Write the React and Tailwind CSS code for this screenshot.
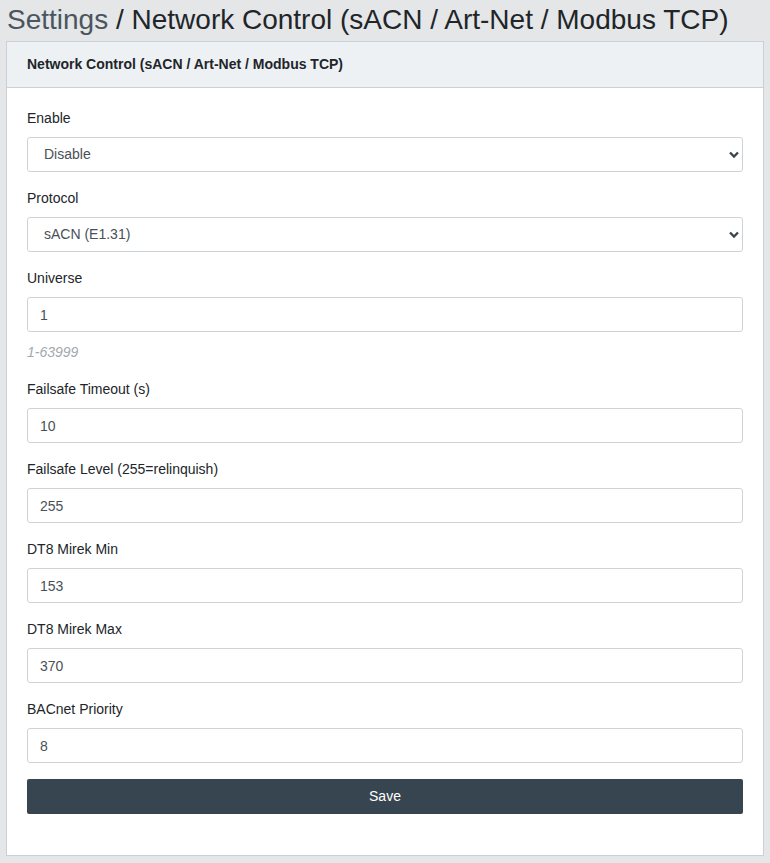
import React from 'react'

const fields = [
  { label: 'Universe', value: '1', help: '1-63999' },
  { label: 'Failsafe Timeout (s)', value: '10' },
  { label: 'Failsafe Level (255=relinquish)', value: '255' },
  { label: 'DT8 Mirek Min', value: '153' },
  { label: 'DT8 Mirek Max', value: '370' },
  { label: 'BACnet Priority', value: '8' },
]

function SelectField({ label, value, options }) {
  return (
    <div className="mb-4">
      <label className="block mb-[8px] leading-[21px]">{label}</label>
      <div className="relative">
        <select
          defaultValue={value}
          className="appearance-none w-full h-[35px] pl-[16px] pr-6 bg-white border border-[#ccd4da] rounded-[3px] text-[#495057] text-[14px] outline-none"
        >
          {options.map((o) => (
            <option key={o}>{o}</option>
          ))}
        </select>
        <svg className="pointer-events-none absolute right-[3px] top-[14px] w-[12px] h-[8px]" viewBox="0 0 12 8">
          <path d="M2 1.5 L6 5.5 L10 1.5" fill="none" stroke="#3b454c" strokeWidth="2.4" />
        </svg>
      </div>
    </div>
  )
}

export default function App() {
  return (
    <div className="min-h-[863px] bg-[#e4e6e8] px-[6px] pb-[8px] text-[14px] text-[#212529]" style={{ fontFamily: '"Liberation Sans", Arial, sans-serif' }}>
      {/* Page title */}
      <h1 className="pl-[1px] pt-[2px] h-[41px] text-[28px] leading-[36px] font-normal text-[#212529] whitespace-nowrap">
        <span className="text-[#4b5560]">Settings</span> / Network Control (sACN / Art-Net / Modbus TCP)
      </h1>

      {/* Card */}
      <div className="bg-white border border-[#c8d1d8] w-[758px]">
        <div className="h-[46px] flex items-center px-[20px] bg-[#eef1f4] border-b border-[#c8d1d8] font-bold text-[14px]">
          Network Control (sACN / Art-Net / Modbus TCP)
        </div>

        <div className="px-[20px] pt-[20px] pb-[41px]">
          <SelectField label="Enable" value="Disable" options={['Disable', 'Enable']} />
          <SelectField label="Protocol" value="sACN (E1.31)" options={['sACN (E1.31)', 'Art-Net', 'Modbus TCP']} />

          {fields.map((f) => (
            <div key={f.label} className="mb-4">
              <label className="block mb-[8px] leading-[21px]">{f.label}</label>
              <input
                defaultValue={f.value}
                className="w-full h-[35px] px-[12px] bg-white border border-[#ccd4da] rounded-[3px] text-[#495057] text-[14px] outline-none"
              />
              {f.help && (
                <div className="mt-[10px] italic text-[#a3a8ad] leading-[21px]">{f.help}</div>
              )}
            </div>
          ))}

          <button className="w-full h-[35px] bg-[#36454f] text-white rounded-[2px] text-[14px]">
            Save
          </button>
        </div>
      </div>
    </div>
  )
}
